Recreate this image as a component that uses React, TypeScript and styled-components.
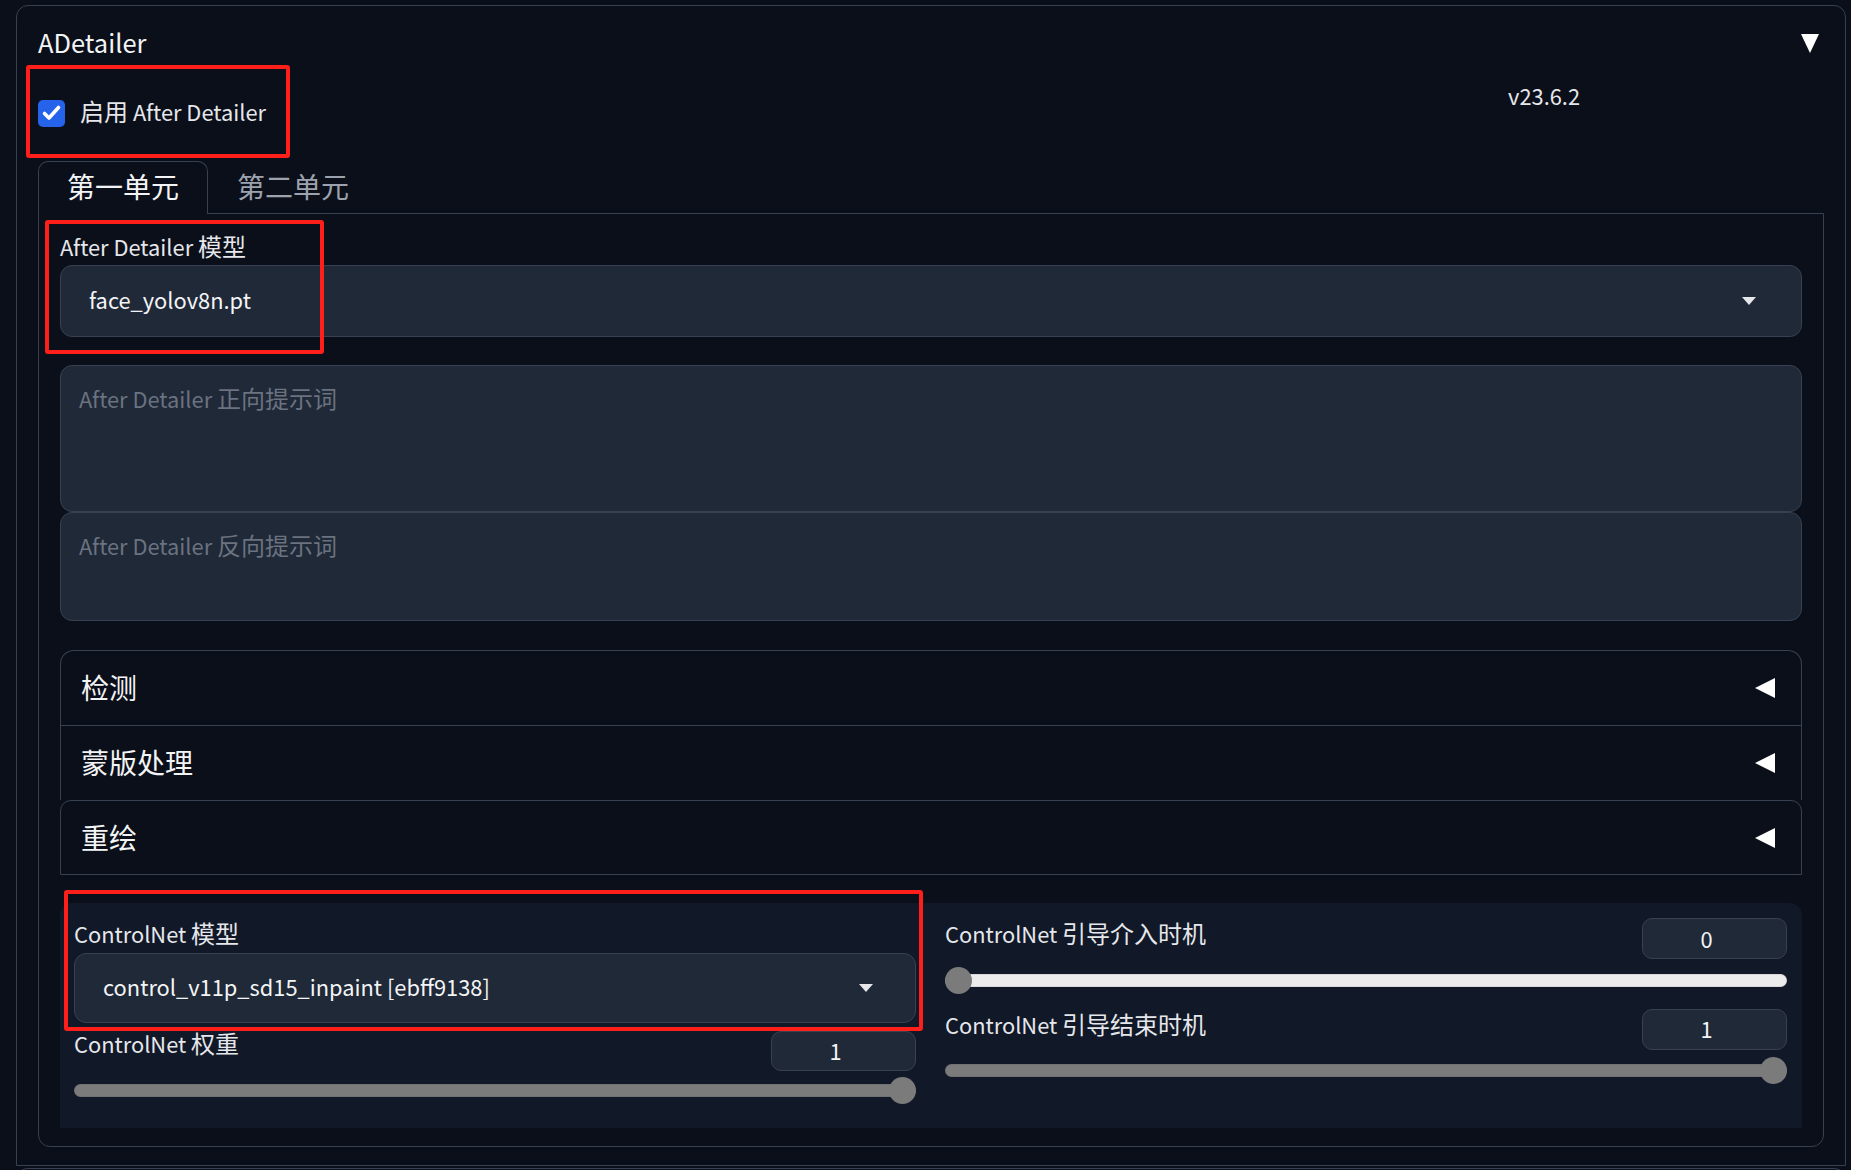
import React from "react";
import styled, { createGlobalStyle } from "styled-components";

const GlobalStyle = createGlobalStyle`
  html, body {
    margin: 0;
    padding: 0;
    background: #0b0f19;
    overflow: hidden;
  }
  body {
    font-family: "Noto Sans CJK SC", "Noto Sans", sans-serif;
    color: #f3f4f6;
  }
  * { box-sizing: border-box; }
`;

const Page = styled.div`
  position: relative;
  width: 1851px;
  height: 1170px;
  overflow: hidden;
  padding: 5px 5px 0 16px;
  background: #0b0f19;
`;

const Block = styled.section`
  display: flex;
  flex-direction: column;
  border: 1px solid #374151;
  border-radius: 12px 12px 0 0;
  padding: 17px 21px 18px;
`;

const NextBlock = styled.div`
  margin-top: 2px;
  height: 40px;
  border: 1px solid #374151;
  border-bottom: none;
  border-radius: 12px 12px 0 0;
`;

/* Latin runs are set a little smaller so they get the proportions of the original sans */
const Latin = styled.span`
  font-size: 0.91em;
  line-height: 1;
`;

const CJK_RE = /([\u2E80-\u9FFF\uF900-\uFAFF\uFF00-\uFFEF]+)/;

const Mixed = ({ text }: { text: string }) => (
  <>
    {text
      .split(CJK_RE)
      .filter(Boolean)
      .map((part, i) =>
        CJK_RE.test(part) ? (
          <React.Fragment key={i}>{part}</React.Fragment>
        ) : (
          <Latin key={i}>{part}</Latin>
        )
      )}
  </>
);

const Header = styled.div`
  display: flex;
  justify-content: space-between;
  align-items: flex-start;
`;

const Title = styled.div`
  font-size: 28px;
  line-height: 36px;
  color: #f3f4f6;
`;

const Caret = styled.svg`
  margin-top: 11px;
  margin-right: 5px;
`;

const TopRow = styled.div`
  display: flex;
  justify-content: space-between;
  align-items: flex-start;
  padding-bottom: 34px;
`;

const CheckLabel = styled.label`
  display: flex;
  align-items: flex-start;
  gap: 15px;
  margin-top: 36.5px;
  font-size: 24px;
  line-height: 30px;
  color: #e5e7eb;
`;

const CheckBox = styled.span`
  display: flex;
  width: 27px;
  height: 27px;
  margin-top: 4.5px;
  border-radius: 5px;
  background: #2563eb;
`;

const Version = styled.div`
  margin-top: 20.5px;
  margin-right: 244px;
  font-size: 24px;
  line-height: 30px;
  color: #e5e7eb;
`;

const TabNav = styled.div`
  display: flex;
  height: 52px;
`;

const Tab = styled.button<{ $active?: boolean }>`
  position: relative;
  z-index: ${(p) => (p.$active ? 1 : 0)};
  height: ${(p) => (p.$active ? 53 : 52)}px;
  margin-bottom: ${(p) => (p.$active ? -1 : 0)}px;
  padding: 0 28px ${(p) => (p.$active ? 5 : 4)}px;
  font-family: inherit;
  font-size: 28px;
  line-height: 36px;
  background: ${(p) => (p.$active ? "#0b0f19" : "transparent")};
  color: ${(p) => (p.$active ? "#f3f4f6" : "#9ca3af")};
  border: 1px solid ${(p) => (p.$active ? "#374151" : "transparent")};
  border-bottom: none;
  border-radius: 10px 10px 0 0;
  cursor: pointer;
`;

const TabPanel = styled.div`
  display: flex;
  flex-direction: column;
  gap: 28px;
  border: 1px solid #374151;
  border-radius: 0 0 12px 12px;
  padding: 16.5px 21px 18px;
`;

const Field = styled.div`
  display: flex;
  flex-direction: column;
`;

const FieldLabel = styled.div`
  font-size: 24px;
  line-height: 30px;
  color: #e5e7eb;
  margin-bottom: 4.5px;
`;

const Select = styled.div<{ $h: number; $pr: number }>`
  display: flex;
  align-items: center;
  justify-content: space-between;
  height: ${(p) => p.$h}px;
  padding: 0 ${(p) => p.$pr}px 0 28px;
  background: #1f2937;
  border: 1px solid #374151;
  border-radius: 12px;
  font-size: 24px;
  line-height: 30px;
  color: #f3f4f6;
`;

const SelectValue = styled.span`
  margin-bottom: 4px;
`;

const PromptGroup = styled.div`
  display: flex;
  flex-direction: column;
`;

const Prompt = styled.div<{ $h: number }>`
  height: ${(p) => p.$h}px;
  padding: 16.5px 18px;
  background: #1f2937;
  border: 1px solid #374151;
  border-radius: 12px;
  font-size: 24px;
  line-height: 30px;
  cursor: text;
`;

const Placeholder = styled.span`
  color: #6b7280;
`;

const AccordionGroup = styled.div`
  display: flex;
  flex-direction: column;
  margin-top: 1px;
`;

const AccItem = styled.div<{ $radius: number; $last?: boolean }>`
  display: flex;
  align-items: center;
  justify-content: space-between;
  height: 75px;
  padding: 0 26px 0 20px;
  border: 1px solid #374151;
  border-bottom: ${(p) => (p.$last ? "1px solid #374151" : "none")};
  border-radius: ${(p) => `${p.$radius}px ${p.$radius}px 0 0`};
  font-size: 28px;
  line-height: 36px;
  color: #f3f4f6;
`;

const AccTitle = styled.span`
  margin-bottom: 2px;
`;

const CnPanel = styled.div`
  display: grid;
  grid-template-columns: 1fr 1fr;
  column-gap: 29px;
  align-items: start;
  padding: 15px 15px 24px 14px;
  background: #111827;
  border-radius: 12px 12px 0 0;
`;

const Column = styled.div<{ $gap: number }>`
  display: flex;
  flex-direction: column;
  gap: ${(p) => p.$gap}px;
`;

const SliderBlock = styled.div<{ $compact?: boolean }>`
  display: flex;
  flex-direction: column;
  gap: ${(p) => (p.$compact ? 6.5 : 7.5)}px;
`;

const SliderHead = styled.div`
  display: flex;
  justify-content: space-between;
  align-items: flex-start;
`;

const SliderLabel = styled.div<{ $compact?: boolean }>`
  margin-top: ${(p) => (p.$compact ? -3 : 0)}px;
  font-size: 24px;
  line-height: 30px;
  color: #e5e7eb;
`;

const NumberBox = styled.div<{ $compact?: boolean }>`
  width: 145px;
  height: ${(p) => (p.$compact ? 40 : 41)}px;
  display: flex;
  align-items: center;
  justify-content: center;
  padding-right: 16px;
  background: #1f2937;
  border: 1px solid #374151;
  border-radius: 10px;
  font-size: 24px;
  color: #f3f4f6;
`;

const SliderWrap = styled.div`
  position: relative;
  height: 27px;
  display: flex;
  align-items: center;
`;

const Track = styled.div<{ $v: number }>`
  width: 100%;
  height: 13px;
  border-radius: 7px;
  background: ${(p) =>
    `linear-gradient(to right, #7b7b7b 0%, #7b7b7b ${p.$v * 100}%, #ececec ${
      p.$v * 100
    }%, #ececec 100%)`};
  box-shadow: inset 0 0 0 1px rgba(0, 0, 0, 0.08);
`;

const Thumb = styled.div<{ $v: number }>`
  position: absolute;
  top: 0;
  left: ${(p) => `calc((100% - 27px) * ${p.$v})`};
  width: 27px;
  height: 27px;
  border-radius: 50%;
  background: #7b7b7b;
`;

const RedMark = styled.div<{ $x: number; $y: number; $w: number; $h: number }>`
  position: absolute;
  left: ${(p) => p.$x}px;
  top: ${(p) => p.$y}px;
  width: ${(p) => p.$w}px;
  height: ${(p) => p.$h}px;
  border: 4px solid #ff1f1a;
  border-radius: 3px;
  pointer-events: none;
  z-index: 5;
`;

const DropArrow = () => (
  <svg width="14" height="8" viewBox="0 0 14 8">
    <polygon points="0,0 14,0 7,8" fill="#e5e7eb" />
  </svg>
);

const LeftTri = () => (
  <svg width="20" height="20" viewBox="0 0 20 20">
    <polygon points="20,0 20,20 0,10" fill="#ffffff" />
  </svg>
);

const Slider = ({
  label,
  value,
  compact,
}: {
  label: string;
  value: number;
  compact?: boolean;
}) => (
  <SliderBlock $compact={compact}>
    <SliderHead>
      <SliderLabel $compact={compact}>
        <Mixed text={label} />
      </SliderLabel>
      <NumberBox $compact={compact}>
        <Latin>{value}</Latin>
      </NumberBox>
    </SliderHead>
    <SliderWrap>
      <Track $v={value} />
      <Thumb $v={value} />
    </SliderWrap>
  </SliderBlock>
);

export default function App() {
  return (
    <>
      <GlobalStyle />
      <Page>
        <Block>
          <Header>
            <Title>
              <Latin>ADetailer</Latin>
            </Title>
            <Caret width="18" height="19" viewBox="0 0 18 19">
              <polygon points="0,0 18,0 9,19" fill="#ffffff" />
            </Caret>
          </Header>
          <TopRow>
            <CheckLabel>
              <CheckBox>
                <svg width="27" height="27" viewBox="0 0 27 27">
                  <polyline
                    points="6.5,13.5 11,18 20.5,7.5"
                    fill="none"
                    stroke="#ffffff"
                    strokeWidth="3.6"
                    strokeLinecap="round"
                    strokeLinejoin="round"
                  />
                </svg>
              </CheckBox>
              <span>
                <Mixed text="启用 After Detailer" />
              </span>
            </CheckLabel>
            <Version>
              <Latin>v23.6.2</Latin>
            </Version>
          </TopRow>
          <TabNav>
            <Tab $active>第一单元</Tab>
            <Tab>第二单元</Tab>
          </TabNav>
          <TabPanel>
            <Field>
              <FieldLabel>
                <Mixed text="After Detailer 模型" />
              </FieldLabel>
              <Select $h={72} $pr={45}>
                <SelectValue>
                  <Latin>face_yolov8n.pt</Latin>
                </SelectValue>
                <DropArrow />
              </Select>
            </Field>
            <PromptGroup>
              <Prompt $h={147} role="textbox">
                <Placeholder>
                  <Mixed text="After Detailer 正向提示词" />
                </Placeholder>
              </Prompt>
              <Prompt $h={109} role="textbox">
                <Placeholder>
                  <Mixed text="After Detailer 反向提示词" />
                </Placeholder>
              </Prompt>
            </PromptGroup>
            <AccordionGroup>
              <AccItem $radius={14}>
                <AccTitle>检测</AccTitle>
                <LeftTri />
              </AccItem>
              <AccItem $radius={0}>
                <AccTitle>蒙版处理</AccTitle>
                <LeftTri />
              </AccItem>
              <AccItem $radius={11} $last>
                <AccTitle>重绘</AccTitle>
                <LeftTri />
              </AccItem>
            </AccordionGroup>
            <CnPanel>
              <Column $gap={8}>
                <Field>
                  <FieldLabel>
                    <Mixed text="ControlNet 模型" />
                  </FieldLabel>
                  <Select $h={70} $pr={42}>
                    <SelectValue>
                      <Latin>control_v11p_sd15_inpaint [ebff9138]</Latin>
                    </SelectValue>
                    <DropArrow />
                  </Select>
                </Field>
                <Slider label="ControlNet 权重" value={1} compact />
              </Column>
              <Column $gap={15}>
                <Slider label="ControlNet 引导介入时机" value={0} />
                <Slider label="ControlNet 引导结束时机" value={1} />
              </Column>
            </CnPanel>
          </TabPanel>
        </Block>
        <NextBlock />
        <RedMark $x={26} $y={65} $w={264} $h={93} />
        <RedMark $x={45} $y={220} $w={279} $h={134} />
        <RedMark $x={64} $y={890} $w={859} $h={141} />
      </Page>
    </>
  );
}
